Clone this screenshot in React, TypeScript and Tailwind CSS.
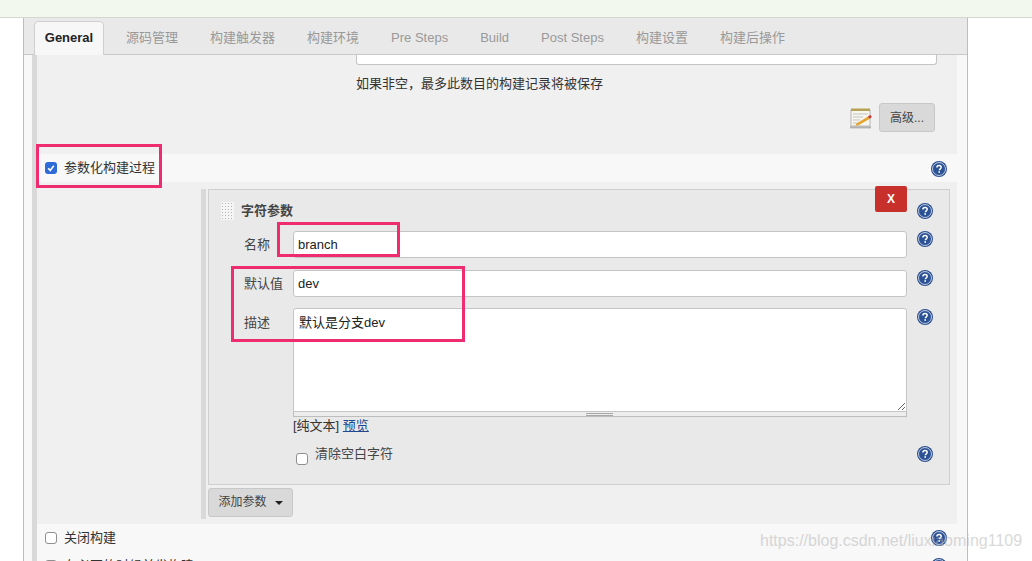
const FONT = '"Liberation Sans","Noto Sans CJK SC",sans-serif';

function Help({ className = "" }: { className?: string }) {
  return (
    <svg viewBox="0 0 16 16" className={`block h-4 w-4 shrink-0 ${className}`}>
      <circle cx="8" cy="8" r="8" fill="#2c4f91" />
      <circle cx="8" cy="8" r="6.4" fill="none" stroke="#dfe6f2" strokeWidth="0.9" />
      <circle cx="8" cy="8" r="5.6" fill="#2c5296" />
      <path d="M5.9 6.4c0-1.3 1-2 2.2-2s2.1.8 2.1 1.9c0 1.5-1.8 1.6-1.8 3" fill="none" stroke="#fff" strokeWidth="1.5" />
      <rect x="7.4" y="10.2" width="1.6" height="1.6" fill="#fff" />
    </svg>
  );
}

function Check({ checked = false }: { checked?: boolean }) {
  return checked ? (
    <span className="flex h-3 w-3 shrink-0 items-center justify-center rounded-[3px] bg-[#2f6ad9]">
      <svg viewBox="0 0 12 12" className="h-3 w-3">
        <path d="M3.2 6.2 5.2 8.4 8.8 3.8" fill="none" stroke="#fff" strokeWidth="1.6" />
      </svg>
    </span>
  ) : (
    <span className="block h-3 w-3 shrink-0 rounded-[3px] border border-[#8f8f8f] bg-white" />
  );
}

function NoteIcon() {
  return (
    <svg viewBox="0 0 24 22" className="h-[22px] w-[24px] shrink-0">
      <rect x="2" y="3" width="19" height="16" fill="#f7f6ee" stroke="#a5a5a5" strokeWidth="0.8" />
      <rect x="2" y="1.5" width="19" height="2.5" fill="#b5a254" />
      <path d="M4 7h15M4 10h10M4 13h7M4 16h5" stroke="#c2c2c2" strokeWidth="1" />
      <path d="M7.5 16.5 19 9.5l1.8 2.2L10 18l-3.6 1z" fill="#e2a32f" />
      <path d="M18.8 9.6 21.5 8l1.3 2-2 1.7z" fill="#c8372c" />
      <rect x="1" y="19.4" width="21" height="2" fill="#b0b0b0" />
    </svg>
  );
}

function Mark({ className }: { className: string }) {
  return <div className={`pointer-events-none absolute border-[3px] border-[#ee2c6f] ${className}`} />;
}

const tabs = ["源码管理", "构建触发器", "构建环境", "Pre Steps", "Build", "Post Steps", "构建设置", "构建后操作"];
const inputCls =
  "block h-[27px] w-[614px] rounded-[3px] border border-[#c4c4c4] bg-white px-[4px] text-[13px] text-[#222] outline-none";

export default function App() {
  return (
    <div className="relative h-[561px] w-[1032px] overflow-hidden bg-white text-[13px] text-[#333]" style={{ fontFamily: FONT }}>
      <div className="h-[18px] border-b border-[#d4d6d2] bg-[#f3f8ef]" />

      <div className="ml-[23px] w-[945px] border-x border-[#bdbdbd] bg-[#f8f8f8]">
        {/* Tabs */}
        <div className="flex h-[37px] items-end border-b border-[#c8c8c8] bg-[#e9e9e9] pl-[10px]">
          <div className="-mb-px flex h-[34px] w-[70px] items-center justify-center rounded-t-[5px] border border-b-0 border-[#cfcfcf] bg-[#f7f7f7] pb-[2px] font-bold text-[#222]">
            General
          </div>
          <div className="flex h-[34px] items-center gap-[32px] pl-[22px] pt-[2px] text-[#999]">
            {tabs.map((t) => (
              <span key={t}>{t}</span>
            ))}
          </div>
        </div>

        {/* Content */}
        <div className="ml-[8px] border-l-[5px] border-[#d9d9d9]">
          {/* Upper block */}
          <div className="mr-[10px] h-[99px] bg-[#f0f0f0] pl-[319px]">
            <div className="h-[10px] w-[581px] rounded-b-[3px] border border-t-0 border-[#c4c4c4] bg-white" />
            <div className="mt-[11px] h-[16px] leading-[16px] text-[#333]">如果非空，最多此数目的构建记录将被保存</div>
            <div className="mt-[11px] flex w-[579px] items-center justify-end gap-[6px]">
              <NoteIcon />
              <div className="flex h-[29px] w-[56px] items-center justify-center rounded-[3px] border border-[#c8c8c8] bg-[#d9d9d9] text-[12px] text-[#444]">
                高级...
              </div>
            </div>
          </div>

          {/* Parameterised row */}
          <div className="flex h-[28px] items-center pl-[8px] pr-[20px]">
            <Check checked />
            <span className="ml-[7px] mt-[-1px]">参数化构建过程</span>
            <Help className="ml-auto mt-[2px]" />
          </div>

          {/* Parameter block */}
          <div className="mr-[10px] h-[342px] bg-[#f0f0f0] pl-[164px] pt-[7px]">
            <div className="h-[330px] border-l-[5px] border-[#d9d9d9] pl-[2px]">
              <div className="relative h-[296px] w-[742px] border border-[#cfcfcf] bg-[#e9e9e9]">
                <div className="flex h-[41px] items-center pl-[12px] pt-[1px]">
                  <div className="h-[18px] w-[13px] bg-[radial-gradient(#b4b4b4_1px,#f5f5f5_1px)] bg-[length:3px_3px]" />
                  <span className="ml-[7px] font-bold text-[#444]">字符参数</span>
                  <Help className="absolute right-[16px] top-[13px]" />
                </div>

                <div className="grid grid-cols-[84px_614px_1fr] items-start">
                  <label className="h-[27px] pl-[35px] leading-[28px] text-[#444]">名称</label>
                  <input readOnly value="branch" className={inputCls} />
                  <Help className="ml-[10px]" />

                  <label className="mt-[12px] h-[27px] pl-[35px] leading-[28px] text-[#444]">默认值</label>
                  <input readOnly value="dev" className={`mt-[12px] ${inputCls}`} />
                  <Help className="ml-[10px] mt-[12px]" />

                  <label className="mt-[11px] pl-[35px] leading-[30px] text-[#444]">描述</label>
                  <div className="mt-[11px]">
                    <textarea
                      readOnly
                      value="默认是分支dev"
                      className="block h-[104px] w-[614px] rounded-t-[3px] border border-[#c4c4c4] bg-white px-[5px] py-[5px] text-[13px] leading-[18px] text-[#222] outline-none"
                    />
                    <div className="flex h-[5px] w-[614px] items-center justify-center border-x border-b border-[#bdbdbd] bg-[#ededed]">
                      <div className="ml-[-1px] h-[3px] w-[27px] border-y border-[#a8a8a8]" />
                    </div>
                    <div className="h-[18px] leading-[18px]">
                      [纯文本] <a href="#" className="text-[#20478f] underline">预览</a>
                    </div>
                    <div className="mt-[10px] flex items-start pl-[3px]">
                      <span className="mt-[8px]">
                        <Check />
                      </span>
                      <span className="ml-[7px] leading-[18px] text-[#444]">清除空白字符</span>
                    </div>
                  </div>
                  <Help className="ml-[10px] mt-[12px]" />
                </div>
                <Help className="absolute right-[16px] top-[256px]" />
              </div>

              <div className="mt-[3px] flex h-[29px] w-[85px] items-center justify-center gap-[8px] rounded-[3px] border border-[#c8c8c8] bg-[#d9d9d9] pb-[1px] text-[12px] text-[#444]">
                <span>添加参数</span>
                <span className="mt-[2px] h-0 w-0 border-x-[4px] border-t-[4px] border-x-transparent border-t-[#222]" />
              </div>
            </div>
          </div>

          {/* Bottom rows */}
          <div className="flex h-[28px] items-center pl-[8px] pr-[20px]">
            <Check />
            <span className="ml-[7px]">关闭构建</span>
            <Help className="ml-auto" />
          </div>
          <div className="flex h-[28px] items-center pl-[8px] pr-[20px]">
            <Check />
            <span className="ml-[7px]">在必要的时候并发构建</span>
            <Help className="ml-auto" />
          </div>
        </div>
      </div>

      {/* Delete button on the parameter card */}
      <div className="absolute left-[875px] top-[186px] flex h-[26px] w-[32px] items-center justify-center rounded-[2px] bg-[#c8302b] text-[12px] font-bold text-white">
        X
      </div>

      {/* Annotations */}
      <Mark className="left-[36px] top-[144px] h-[44px] w-[126px]" />
      <Mark className="left-[277px] top-[222px] h-[35px] w-[123px]" />
      <Mark className="left-[231px] top-[266px] h-[76px] w-[234px]" />

      {/* Watermark */}
      <div className="pointer-events-none absolute left-[760px] top-[531px] whitespace-nowrap text-[16px] leading-[20px] text-[#b4b4b4] opacity-50">
        https://blog.csdn.net/liuxiaoming1109
      </div>
    </div>
  );
}
